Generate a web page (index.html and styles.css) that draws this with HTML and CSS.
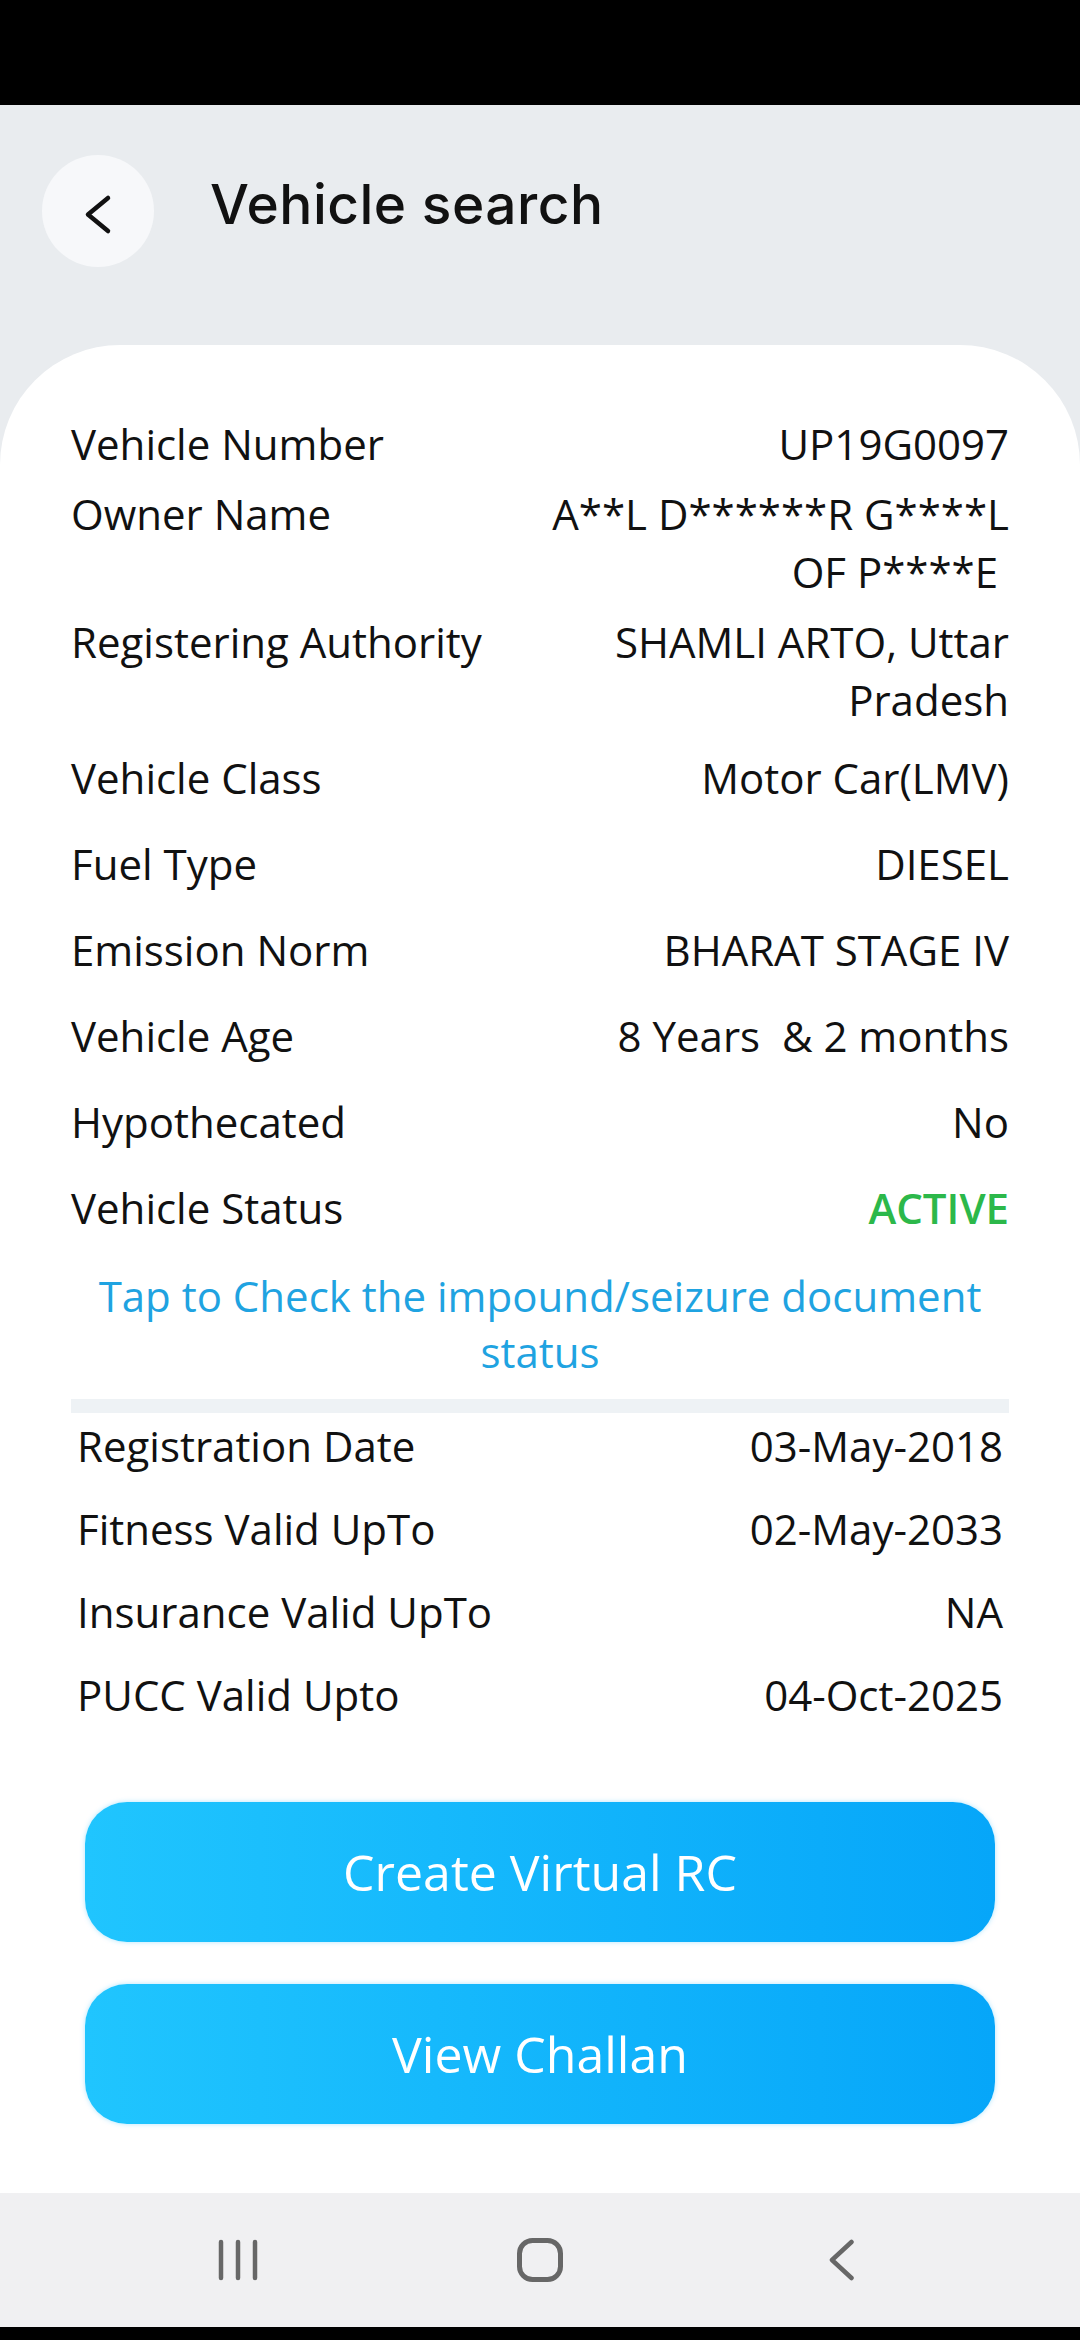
FILE: index.html
```html
<!DOCTYPE html>
<html lang="en">
<head>
    <meta charset="UTF-8">
    <meta name="viewport" content="width=device-width, initial-scale=1.0">
    <title>Vehicle search</title>
    <link rel="stylesheet" href="styles.css">
</head>
<body>

    <div class="status-bar"></div>

    <!-- Barra superior -->
    <header class="topbar">
        <button class="back-btn" type="button" aria-label="Back">
            <svg width="112" height="112" viewBox="0 0 112 112">
                <polyline points="66,43 46,59.5 66,76" fill="none" stroke="#111" stroke-width="4.5" stroke-linecap="round" stroke-linejoin="round"/>
            </svg>
        </button>
        <h1 class="title">Vehicle search</h1>
    </header>

    <main class="card">
        <!-- Dades del vehicle -->
        <div class="details">
            <div class="row">
                <span class="label">Vehicle Number</span>
                <span class="value">UP19G0097</span>
            </div>
            <div class="row">
                <span class="label">Owner Name</span>
                <span class="value">A**L D******R G****L OF P****E&nbsp;</span>
            </div>
            <div class="row">
                <span class="label">Registering Authority</span>
                <span class="value">SHAMLI ARTO, Uttar Pradesh</span>
            </div>
            <div class="row tall">
                <span class="label">Vehicle Class</span>
                <span class="value">Motor Car(LMV)</span>
            </div>
            <div class="row tall">
                <span class="label">Fuel Type</span>
                <span class="value">DIESEL</span>
            </div>
            <div class="row tall">
                <span class="label">Emission Norm</span>
                <span class="value">BHARAT STAGE IV</span>
            </div>
            <div class="row tall">
                <span class="label">Vehicle Age</span>
                <span class="value">8 Years&nbsp; &amp; 2 months</span>
            </div>
            <div class="row tall">
                <span class="label">Hypothecated</span>
                <span class="value">No</span>
            </div>
            <div class="row tall">
                <span class="label">Vehicle Status</span>
                <span class="value status-active">ACTIVE</span>
            </div>
        </div>

        <a class="impound-link" href="#">Tap to Check the impound/seizure document status</a>

        <div class="divider"></div>

        <!-- Validesa dels documents -->
        <div class="validity">
            <div class="row">
                <span class="label">Registration Date</span>
                <span class="value">03-May-2018</span>
            </div>
            <div class="row">
                <span class="label">Fitness Valid UpTo</span>
                <span class="value">02-May-2033</span>
            </div>
            <div class="row">
                <span class="label">Insurance Valid UpTo</span>
                <span class="value">NA</span>
            </div>
            <div class="row">
                <span class="label">PUCC Valid Upto</span>
                <span class="value">04-Oct-2025</span>
            </div>
        </div>

        <div class="actions">
            <button class="action-btn" type="button">Create Virtual RC</button>
            <button class="action-btn" type="button">View Challan</button>
        </div>
    </main>

    <!-- Navegació del sistema -->
    <nav class="nav-bar">
        <div class="nav-slot">
            <svg width="40" height="42" viewBox="0 0 40 42">
                <g stroke="#676767" stroke-width="4.5" stroke-linecap="round">
                    <line x1="3" y1="3" x2="3" y2="39"/>
                    <line x1="20" y1="3" x2="20" y2="39"/>
                    <line x1="37" y1="3" x2="37" y2="39"/>
                </g>
            </svg>
        </div>
        <div class="nav-slot">
            <svg width="46" height="44" viewBox="0 0 46 44">
                <rect x="2.5" y="2.5" width="41" height="39" rx="13" fill="none" stroke="#676767" stroke-width="5"/>
            </svg>
        </div>
        <div class="nav-slot">
            <svg width="26" height="42" viewBox="0 0 26 42">
                <polyline points="22.5,3 3,21 22.5,39" fill="none" stroke="#676767" stroke-width="4.5" stroke-linecap="round" stroke-linejoin="round"/>
            </svg>
        </div>
    </nav>
    <div class="bottom-edge"></div>

</body>
</html>
```

FILE: styles.css
```css
* {
    box-sizing: border-box;
}
body {
    margin: 0;
    height: 2340px;
    display: flex;
    flex-direction: column;
    background-color: #e9ecef;
    font-family: "Open Sans", "Noto Sans", sans-serif;
    color: #111;
}
.status-bar {
    height: 105px;
    background-color: #000;
}
.topbar {
    height: 240px;
    padding: 50px 42px 0;
    display: flex;
    align-items: flex-start;
    gap: 56px;
}
.back-btn {
    width: 112px;
    height: 112px;
    padding: 0;
    border: none;
    border-radius: 50%;
    background-color: #f7f8fa;
    display: flex;
}
.title {
    margin: 16px 0 0;
    font-family: Inter, "Noto Sans", sans-serif;
    font-size: 55px;
    font-weight: 500;
    color: #111;
    letter-spacing: 0.5px;
}
.card {
    flex: 1;
    background-color: #fff;
    border-radius: 120px 120px 0 0;
    padding: 64px 71px 0;
}
.row {
    display: flex;
    justify-content: space-between;
    padding: 6px 0;
    font-size: 42px;
    line-height: 58px;
}
.row.tall {
    padding: 14px 0;
}
.label {
    flex: 1;
}
.value {
    flex: 1;
    text-align: right;
}
.status-active {
    color: #2cb84a;
    font-weight: 600;
}
.impound-link {
    display: block;
    margin-top: 17px;
    font-size: 42px;
    line-height: 56px;
    text-align: center;
    color: #1fa3e1;
    text-decoration: none;
}
.divider {
    margin-top: 19px;
    height: 14px;
    background-color: #eef2f5;
}
.validity {
    padding: 4px 6px 0;
    display: flex;
    flex-direction: column;
    gap: 25px;
}
.validity .row {
    padding: 0;
}
.actions {
    margin-top: 78px;
    padding: 0 14px;
    display: flex;
    flex-direction: column;
    gap: 42px;
}
.action-btn {
    height: 140px;
    border: none;
    border-radius: 42px;
    background: linear-gradient(90deg, #20c5fe, #06a6f9);
    box-shadow: 0 0 5px rgba(30, 180, 250, 0.35);
    color: #fff;
    font-family: "Open Sans", "Noto Sans", sans-serif;
    font-size: 50px;
    cursor: pointer;
}
.nav-bar {
    height: 134px;
    background-color: #f0f0f2;
    display: flex;
    justify-content: center;
    align-items: center;
}
.nav-slot {
    width: 302px;
    display: flex;
    justify-content: center;
}
.bottom-edge {
    height: 13px;
    background-color: #000;
}
```
